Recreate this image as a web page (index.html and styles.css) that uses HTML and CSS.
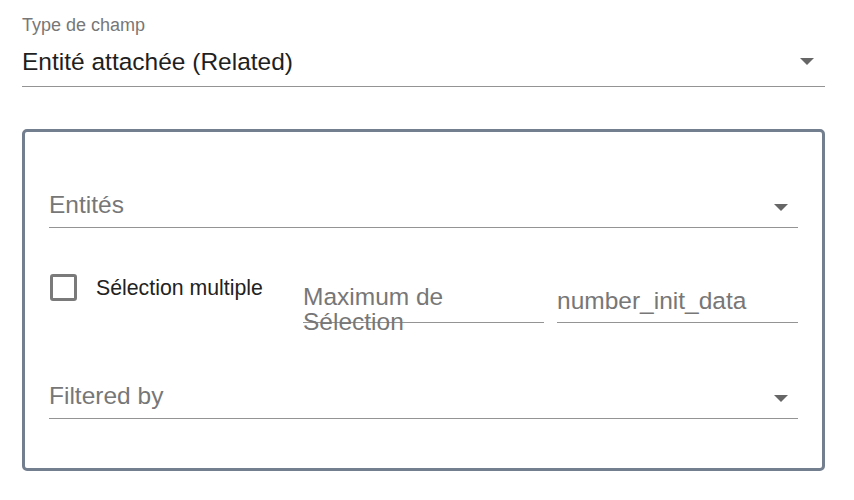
FILE: index.html
```html
<!DOCTYPE html>
<html lang="fr">
<head>
<meta charset="utf-8">
<title>Type de champ</title>
<link rel="stylesheet" href="styles.css">
</head>
<body>
<div class="page">
  <div class="top-field">
    <div class="top-label">Type de champ</div>
    <div class="top-select">
      <span class="top-value">Entité attachée (Related)</span>
      <span class="arrow"></span>
    </div>
  </div>

  <div class="panel">
    <div class="field select entites">
      <span class="placeholder">Entités</span>
      <span class="arrow"></span>
    </div>

    <div class="row">
      <label class="check">
        <span class="box"></span>
        <span class="check-label">Sélection multiple</span>
      </label>
      <div class="field max">
        <span class="placeholder wrap">Maximum de Sélection</span>
      </div>
      <div class="field init">
        <span class="placeholder">number_init_data</span>
      </div>
    </div>

    <div class="field select filtered">
      <span class="placeholder">Filtered by</span>
      <span class="arrow"></span>
    </div>
  </div>
</div>
</body>
</html>
```

FILE: styles.css
```css
html, body {
  margin: 0;
  padding: 0;
  background: #ffffff;
}

body {
  font-family: "Liberation Sans", Arial, sans-serif;
  color: #212121;
}

.page {
  padding: 14px 29px 0 22px;
}

.top-label {
  font-size: 18px;
  line-height: 22px;
  color: #777777;
}

.top-select {
  display: flex;
  align-items: center;
  justify-content: space-between;
  height: 44px;
  margin-top: 6px;
  border-bottom: 1px solid #949494;
}

.top-value {
  font-size: 24.5px;
  line-height: 28px;
  color: #1f1f1f;
  margin-top: -4px;
}

.top-select .arrow {
  margin-right: 11px;
  margin-top: -6px;
}

.arrow {
  width: 0;
  height: 0;
  border-left: 7px solid transparent;
  border-right: 7px solid transparent;
  border-top: 7px solid #666666;
}

.panel {
  margin-top: 42px;
  border: 3px solid #737e8f;
  border-radius: 5px;
  padding: 55px 24px 49px 24px;
}

.field {
  display: flex;
  align-items: center;
  justify-content: space-between;
  height: 40px;
  border-bottom: 1px solid #949494;
}

.field .arrow {
  margin-right: 10px;
}

.placeholder {
  font-size: 24.5px;
  line-height: 28px;
  color: #777777;
}

.select .placeholder {
  margin-top: -5px;
}

.row {
  display: grid;
  grid-template-columns: 1fr 1fr 1fr;
  column-gap: 13px;
  align-items: start;
  margin-top: 42px;
}

.row .field {
  margin-top: 12px;
}

.field.init .placeholder {
  margin-top: -3px;
}

.field.max {
  align-items: flex-start;
  overflow: visible;
}

.wrap {
  display: block;
  padding-top: 2px;
  line-height: 25px;
}

.check {
  display: flex;
  align-items: center;
  padding-top: 4px;
  padding-left: 1px;
  cursor: pointer;
}

.box {
  box-sizing: border-box;
  width: 27px;
  height: 27px;
  border: 3px solid #7a7a7a;
  border-radius: 3px;
  flex: none;
}

.check-label {
  margin-left: 19px;
  font-size: 21.3px;
  line-height: 24px;
  color: #222222;
}

.filtered {
  margin-top: 55px;
}
```
